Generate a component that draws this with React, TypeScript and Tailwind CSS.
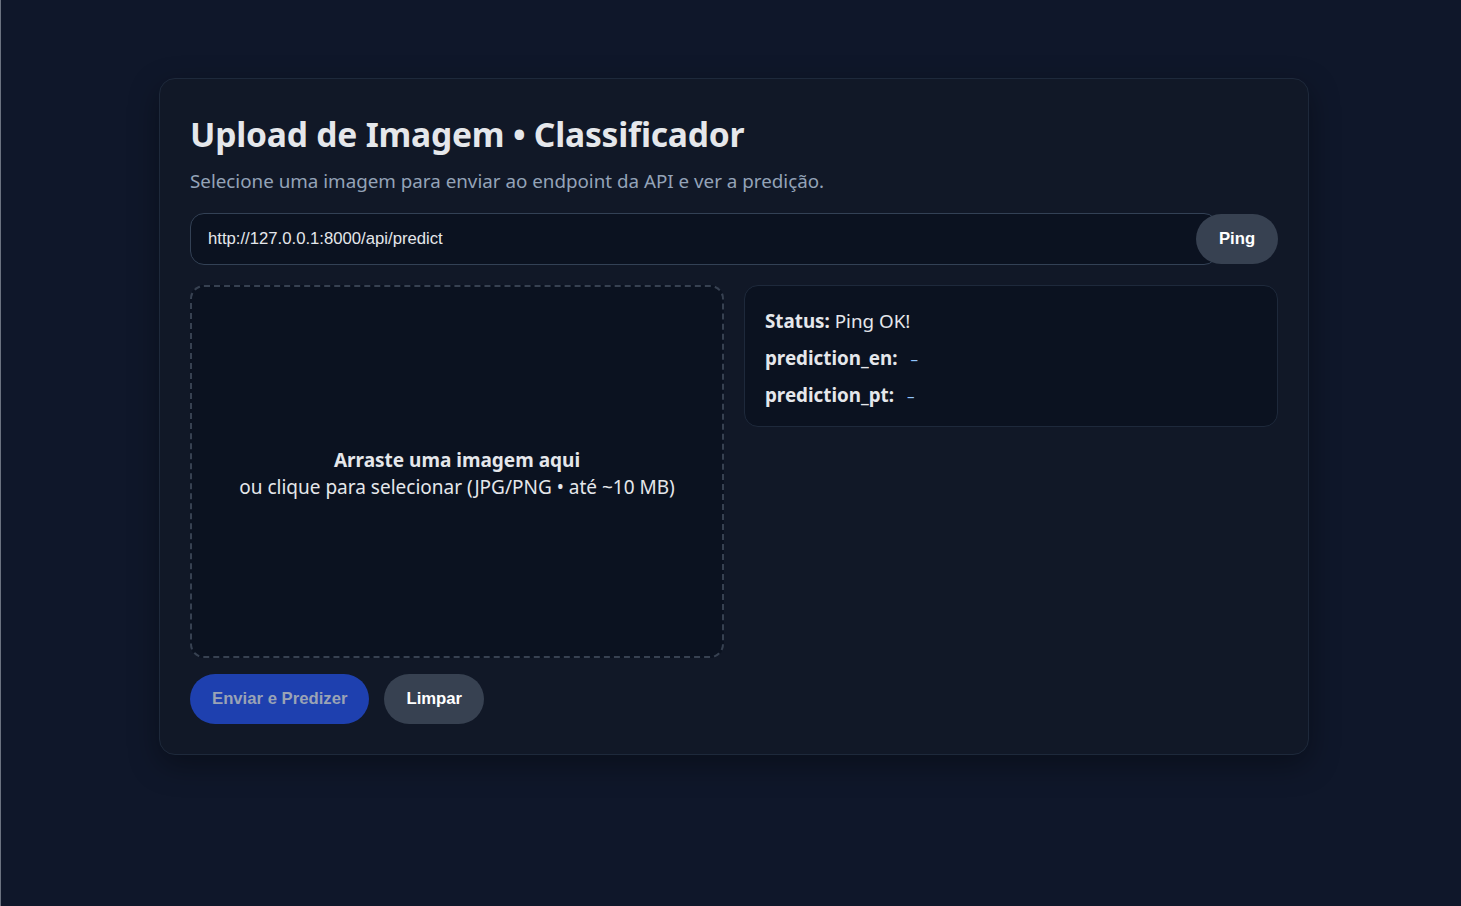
import React from "react";

export default function App() {
  const sans = { fontFamily: '"Noto Sans", "Open Sans", sans-serif' };
  const arial = { fontFamily: '"Liberation Sans", Arial, sans-serif' };
  return (
    <div className="min-h-[906px] w-full bg-[#0f172a] border-l border-[#6b7280] flex justify-center pl-[6px]" style={sans}>
      <div className="mt-[78px] self-start w-[1150px] rounded-[16px] border border-[#1e293b] bg-[#111827] px-[30px] pt-[31px] pb-[30px] shadow-[0_10px_30px_rgba(0,0,0,0.35)]">
        <h1 className="text-[33.6px] leading-[48px] font-bold text-[#e5e7eb] tracking-[-0.2px]">
          Upload de Imagem • Classificador
        </h1>
        <p className="mt-[10px] text-[18.8px] leading-[27px] text-[#94a3b8]">
          Selecione uma imagem para enviar ao endpoint da API e ver a predição.
        </p>

        <div className="mt-[18px] flex h-[52px] items-center">
          <input
            readOnly
            value="http://127.0.0.1:8000/api/predict"
            className="h-full min-w-0 flex-1 rounded-[14px] border border-[#334155] bg-[#0b1220] pl-[17px] text-[16.7px] text-[#e5e7eb] outline-none"
            style={arial}
          />
          <button
            className="relative -ml-[22px] h-[50px] w-[82px] shrink-0 rounded-full bg-[#374151] text-[16.7px] font-bold text-white"
            style={arial}
          >
            Ping
          </button>
        </div>

        <div className="mt-[20px] grid grid-cols-2 gap-[20px] items-start">
          <div className="flex h-[373px] flex-col items-center justify-center rounded-[14px] border-2 border-dashed border-[#374151] bg-[#0b1220] pt-[4px] text-center text-[19px] leading-[27px] text-[#e5e7eb]">
            <div className="font-bold">Arraste uma imagem aqui</div>
            <div>ou clique para selecionar (JPG/PNG • até ~10 MB)</div>
          </div>
          <div className="flex h-[142px] flex-col gap-[10px] rounded-[14px] border border-[#1e293b] bg-[#0b1220] pl-[20px] pt-[22px] text-[18.8px] leading-[27px] text-[#e5e7eb]">
            <div>
              <span className="font-bold">Status:</span> Ping OK!
            </div>
            <div>
              <span className="font-bold">prediction_en:</span>
              <span className="ml-[13px] text-[15px] leading-[0] text-[#93c5fd]">–</span>
            </div>
            <div>
              <span className="font-bold">prediction_pt:</span>
              <span className="ml-[13px] text-[15px] leading-[0] text-[#93c5fd]">–</span>
            </div>
          </div>
        </div>

        <div className="mt-[16px] flex gap-[15px]" style={arial}>
          <button className="h-[50px] rounded-full bg-[#1e40af] px-[22px] text-[16.7px] font-bold text-[#9aa3b5]">
            Enviar e Predizer
          </button>
          <button className="h-[50px] rounded-full bg-[#374151] px-[22px] text-[16.7px] font-bold text-white">
            Limpar
          </button>
        </div>
      </div>
    </div>
  );
}
